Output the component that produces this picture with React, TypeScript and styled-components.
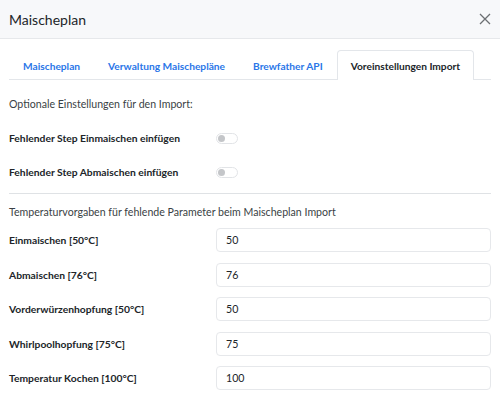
import React from "react";
import styled, { createGlobalStyle } from "styled-components";

const GlobalStyle = createGlobalStyle`
  html, body { margin: 0; padding: 0; background: #ffffff; }
  body { font-family: Lato, "Noto Sans", sans-serif; color: #212529; }
  * { box-sizing: border-box; }
`;

const Modal = styled.div`
  width: 500px;
  height: 395px;
  overflow: hidden;
  background: #fff;
  display: flex;
  flex-direction: column;
`;

const Header = styled.div`
  height: 39px;
  flex: none;
  display: flex;
  align-items: center;
  justify-content: space-between;
  padding: 0 8px 0 9px;
  background: #f7f8fa;
  border-bottom: 1px solid #e6e8eb;
`;

const Title = styled.h1`
  margin: 0;
  font-size: 14px;
  font-weight: 400;
  color: #212529;
`;

const CloseButton = styled.button`
  border: 0;
  background: transparent;
  padding: 0;
  width: 14px;
  height: 14px;
  display: flex;
  align-items: center;
  justify-content: center;
  cursor: pointer;
`;

const Body = styled.div`
  padding: 11px 9px 0 9px;
  display: flex;
  flex-direction: column;
`;

const TabList = styled.div`
  display: flex;
  height: 30px;
  border-bottom: 1px solid #e3e6ea;
`;

const Tab = styled.div<{ $active?: boolean }>`
  height: 30px;
  padding: 0 13px;
  display: flex;
  align-items: center;
  white-space: nowrap;
  font-size: 10.2px;
  font-weight: 700;
  color: ${(p) => (p.$active ? "#212529" : "#2a76e8")};
  background: ${(p) => (p.$active ? "#fff" : "transparent")};
  border: 1px solid ${(p) => (p.$active ? "#e3e6ea" : "transparent")};
  border-bottom: 0;
  border-radius: 4px 4px 0 0;
  margin-bottom: -1px;
`;

const Pane = styled.div`
  padding-top: 16px;
  display: flex;
  flex-direction: column;
`;

const Hint = styled.div`
  font-size: 10.6px;
  color: #3a3f44;
  line-height: 16px;
  white-space: nowrap;
`;

const SettingsGrid = styled.div<{ $gap: number }>`
  display: grid;
  grid-template-columns: 207px 1fr;
  row-gap: ${(p) => p.$gap}px;
  align-items: center;
`;

const Label = styled.div`
  font-size: 10.3px;
  font-weight: 700;
  color: #212529;
  line-height: 16px;
  white-space: nowrap;
`;

const Toggle = styled.div`
  width: 22px;
  height: 11px;
  border: 1px solid #e2e4e7;
  border-radius: 6px;
  display: flex;
  align-items: center;
  padding-left: 1px;
  background: #fff;
`;

const Knob = styled.div`
  width: 7px;
  height: 7px;
  border-radius: 50%;
  background: #c4c6c9;
`;

const Divider = styled.hr`
  border: 0;
  border-top: 1px solid #dfe2e5;
  margin: 0;
`;

const Spacer = styled.div<{ $h: number }>`
  height: ${(p) => p.$h}px;
  flex: none;
`;

const Input = styled.input`
  display: block;
  height: 24px;
  width: 100%;
  margin: 0;
  border: 1px solid #e6e8eb;
  border-radius: 4px;
  padding: 0 9px;
  font-family: inherit;
  font-size: 10.6px;
  color: #212529;
  background: #fff;
  outline: none;
`;

const tabs = ["Maischeplan", "Verwaltung Maischepläne", "Brewfather API", "Voreinstellungen Import"];

const toggles = ["Fehlender Step Einmaischen einfügen", "Fehlender Step Abmaischen einfügen"];

const temps: [string, string][] = [
  ["Einmaischen [50°C]", "50"],
  ["Abmaischen [76°C]", "76"],
  ["Vorderwürzenhopfung [50°C]", "50"],
  ["Whirlpoolhopfung [75°C]", "75"],
  ["Temperatur Kochen [100°C]", "100"],
];

export default function App() {
  return (
    <>
      <GlobalStyle />
      <Modal>
        <Header>
          <Title>Maischeplan</Title>
          <CloseButton aria-label="Schließen">
            <svg width="12" height="12" viewBox="0 0 12 12">
              <path d="M1 1 L11 11 M11 1 L1 11" stroke="#6c6f73" strokeWidth="1.3" />
            </svg>
          </CloseButton>
        </Header>
        <Body>
          <TabList>
            {tabs.map((t, i) => (
              <Tab key={t} $active={i === 3}>
                {t}
              </Tab>
            ))}
          </TabList>
          <Pane>
            <Hint>Optionale Einstellungen für den Import:</Hint>
            <Spacer $h={18} />
            <SettingsGrid $gap={18}>
              {toggles.map((t) => (
                <React.Fragment key={t}>
                  <Label>{t}</Label>
                  <Toggle>
                    <Knob />
                  </Toggle>
                </React.Fragment>
              ))}
            </SettingsGrid>
            <Spacer $h={13} />
            <Divider />
            <Spacer $h={10} />
            <Hint>Temperaturvorgaben für fehlende Parameter beim Maischeplan Import</Hint>
            <Spacer $h={8} />
            <SettingsGrid $gap={10.5}>
              {temps.map(([l, v]) => (
                <React.Fragment key={l}>
                  <Label>{l}</Label>
                  <Input defaultValue={v} />
                </React.Fragment>
              ))}
            </SettingsGrid>
          </Pane>
        </Body>
      </Modal>
    </>
  );
}
